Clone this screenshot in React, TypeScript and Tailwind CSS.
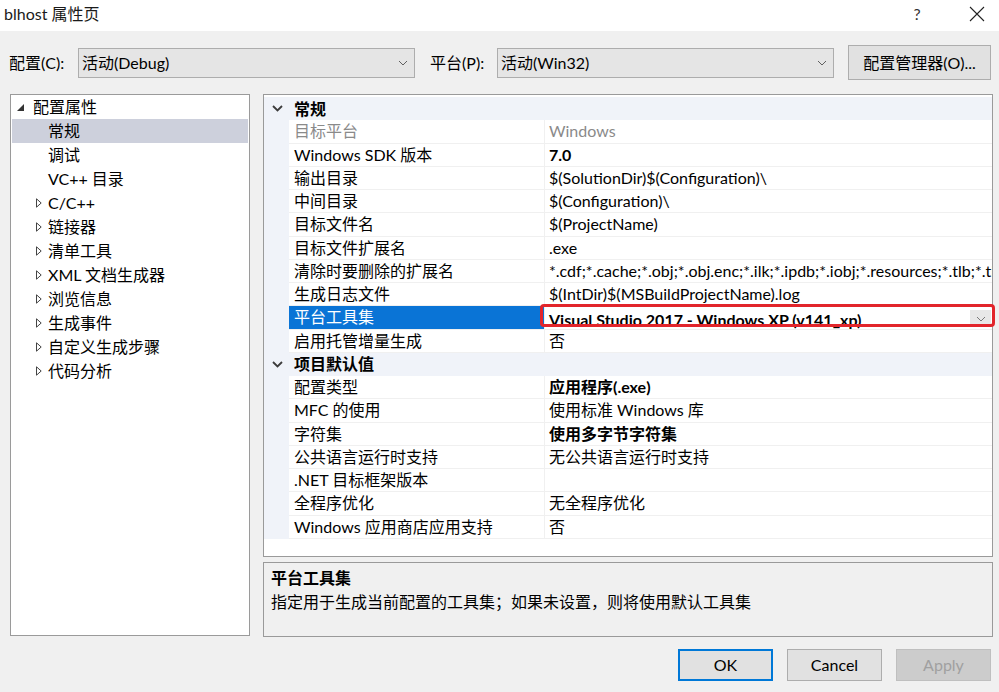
import React from 'react'

const FONT = { fontFamily: 'Lato, "Noto Sans CJK SC", sans-serif' }

type Row = { name: string; value: string; bold?: boolean; gray?: boolean; selected?: boolean }

const general: Row[] = [
  { name: '目标平台', value: 'Windows', gray: true },
  { name: 'Windows SDK 版本', value: '7.0', bold: true },
  { name: '输出目录', value: '$(SolutionDir)$(Configuration)\\' },
  { name: '中间目录', value: '$(Configuration)\\' },
  { name: '目标文件名', value: '$(ProjectName)' },
  { name: '目标文件扩展名', value: '.exe' },
  { name: '清除时要删除的扩展名', value: '*.cdf;*.cache;*.obj;*.obj.enc;*.ilk;*.ipdb;*.iobj;*.resources;*.tlb;*.tli;*.tlh;*.tmp;*.rsp;*.pgc;*.pgd' },
  { name: '生成日志文件', value: '$(IntDir)$(MSBuildProjectName).log' },
  { name: '平台工具集', value: 'Visual Studio 2017 - Windows XP (v141_xp)', bold: true, selected: true },
  { name: '启用托管增量生成', value: '否' },
]

const defaults: Row[] = [
  { name: '配置类型', value: '应用程序(.exe)', bold: true },
  { name: 'MFC 的使用', value: '使用标准 Windows 库' },
  { name: '字符集', value: '使用多字节字符集', bold: true },
  { name: '公共语言运行时支持', value: '无公共语言运行时支持' },
  { name: '.NET 目标框架版本', value: '' },
  { name: '全程序优化', value: '无全程序优化' },
  { name: 'Windows 应用商店应用支持', value: '否' },
]

const treeItems: { label: string; expandable?: boolean; selected?: boolean }[] = [
  { label: '常规', selected: true },
  { label: '调试' },
  { label: 'VC++ 目录' },
  { label: 'C/C++', expandable: true },
  { label: '链接器', expandable: true },
  { label: '清单工具', expandable: true },
  { label: 'XML 文档生成器', expandable: true },
  { label: '浏览信息', expandable: true },
  { label: '生成事件', expandable: true },
  { label: '自定义生成步骤', expandable: true },
  { label: '代码分析', expandable: true },
]

function ComboChevron({ color = '#606060' }: { color?: string }) {
  return (
    <svg width="10" height="6" viewBox="0 0 10 6" fill="none">
      <path d="M1 1l4 4 4-4" stroke={color} strokeWidth="1" />
    </svg>
  )
}

function GroupRow({ title }: { title: string }) {
  return (
    <div className="flex h-[23.25px] bg-[#f0f3f9]">
      <div className="w-[25px] flex items-center justify-center pl-[1px]">
        <svg width="11" height="7" viewBox="0 0 11 7" fill="none">
          <path d="M1 1l4.5 4.5L10 1" stroke="#3c3c3c" strokeWidth="1.8" />
        </svg>
      </div>
      <div className="flex items-center pl-[5px] font-bold text-black">{title}</div>
    </div>
  )
}

function PropRow({ row }: { row: Row }) {
  return (
    <div className="flex h-[23.25px] bg-[#f0f3f9]">
      <div className="w-[25px] shrink-0" />
      <div
        className={
          'w-[255px] shrink-0 flex items-center pl-[5px] border-b border-[#f0f0f0] whitespace-nowrap overflow-hidden ' +
          (row.selected ? 'bg-[#0a74d6] text-white border-[#0a74d6]' : 'bg-white ' + (row.gray ? 'text-[#8a8a8a]' : 'text-black'))
        }
      >
        {row.name}
      </div>
      <div className="relative flex-1 min-w-0 flex items-center bg-white border-l border-b border-[#f0f0f0]">
        <div
          className={
            'flex-1 min-w-0 pl-[4px] whitespace-nowrap overflow-hidden ' +
            (row.bold ? 'font-bold ' : '') +
            (row.gray ? 'text-[#8a8a8a]' : 'text-black') +
            (row.selected ? ' pt-[6px]' : '')
          }
        >
          {row.value}
        </div>
        {row.selected && (
          <>
            <div className="w-[21px] h-[17px] mr-[1px] mt-[3px] bg-[#e8e8e8] flex items-center justify-center">
              <ComboChevron color="#7a7a7a" />
            </div>
            <div className="absolute left-[-5px] right-[-3px] top-[-2px] bottom-[2px] border-[3px] border-[#e2252b] rounded-[4px]" />
          </>
        )}
      </div>
    </div>
  )
}

export default function App() {
  return (
    <div className="w-[999px] h-[692px] bg-[#f0f0f0] overflow-hidden text-[16px] text-black flex flex-col" style={FONT}>
      {/* title bar */}
      <div className="h-[31px] bg-white flex items-center shrink-0">
        <div className="pl-[4px] pb-[4px] flex-1 text-[#1a1a1a]">blhost 属性页</div>
        <div className="w-[20px] text-center text-[#333] pb-[4px] mr-[42px]">?</div>
        <div className="mr-[14px] pb-[4px]">
          <svg width="16" height="16" viewBox="0 0 16 16" fill="none">
            <path d="M1 1l14 14M15 1L1 15" stroke="#222" strokeWidth="1.1" />
          </svg>
        </div>
      </div>

      {/* config row */}
      <div className="flex items-center h-[35px] mt-[14px] pl-[9px] shrink-0">
        <span className="w-[69px]">配置(C):</span>
        <div className="w-[337px] h-[30px] bg-[#e5e5e5] border border-[#adadad] flex items-center pl-[3px] pr-[6px]">
          <span className="flex-1">活动(Debug)</span>
          <ComboChevron />
        </div>
        <span className="ml-[15px] w-[67px]">平台(P):</span>
        <div className="w-[337px] h-[30px] bg-[#e5e5e5] border border-[#adadad] flex items-center pl-[3px] pr-[6px]">
          <span className="flex-1">活动(Win32)</span>
          <ComboChevron />
        </div>
        <button className="ml-[14px] w-[143px] h-[35px] bg-[#e1e1e1] border border-[#adadad] flex items-center justify-center">
          配置管理器(O)...
        </button>
      </div>

      {/* main area */}
      <div className="flex mt-[14px] ml-[10px] gap-[13px]">
        {/* tree */}
        <div className="w-[240px] h-[542px] bg-white border border-[#9a9a9a] flex flex-col">
          <div className="flex items-center h-[24px] pl-[6px]">
            <svg width="8" height="8" viewBox="0 0 8 8" className="mr-[8px] mt-[1px]">
              <path d="M7 0L7 7L0 7Z" fill="#333" />
            </svg>
            <span>配置属性</span>
          </div>
          {treeItems.map((t) => (
            <div
              key={t.label}
              className={'flex items-center h-[24px] mx-[1px] ' + (t.selected ? 'bg-[#cdd0dc]' : '')}
            >
              <div className="w-[36px] flex justify-end pr-[6px]">
                {t.expandable && (
                  <svg width="6" height="10" viewBox="0 0 6 10" fill="none">
                    <path d="M0.5 0.8L5.2 5L0.5 9.2Z" stroke="#444" strokeWidth="1" />
                  </svg>
                )}
              </div>
              <span>{t.label}</span>
            </div>
          ))}
        </div>

        {/* right side */}
        <div className="w-[730px] flex flex-col">
          <div className="h-[463px] bg-white border border-[#9a9a9a] pt-[2px] flex flex-col">
            <GroupRow title="常规" />
            {general.map((r) => (
              <PropRow key={r.name} row={r} />
            ))}
            <GroupRow title="项目默认值" />
            {defaults.map((r) => (
              <PropRow key={r.name} row={r} />
            ))}
          </div>
          <div className="mt-[5px] h-[75px] border border-[#9a9a9a] bg-[#f0f0f0] px-[7px] pt-[3px] leading-[24px]">
            <div className="font-bold">平台工具集</div>
            <div>指定用于生成当前配置的工具集；如果未设置，则将使用默认工具集</div>
          </div>
        </div>
      </div>

      {/* buttons */}
      <div className="flex justify-end gap-[14px] mt-[12px] pr-[8px]">
        <button className="w-[95px] h-[32px] bg-[#e1e1e1] border-2 border-[#0078d7]">OK</button>
        <button className="w-[95px] h-[32px] bg-[#e1e1e1] border border-[#adadad]">Cancel</button>
        <button className="w-[95px] h-[32px] bg-[#cccccc] border border-[#bfbfbf] text-[#a0a0a0]">Apply</button>
      </div>
    </div>
  )
}
